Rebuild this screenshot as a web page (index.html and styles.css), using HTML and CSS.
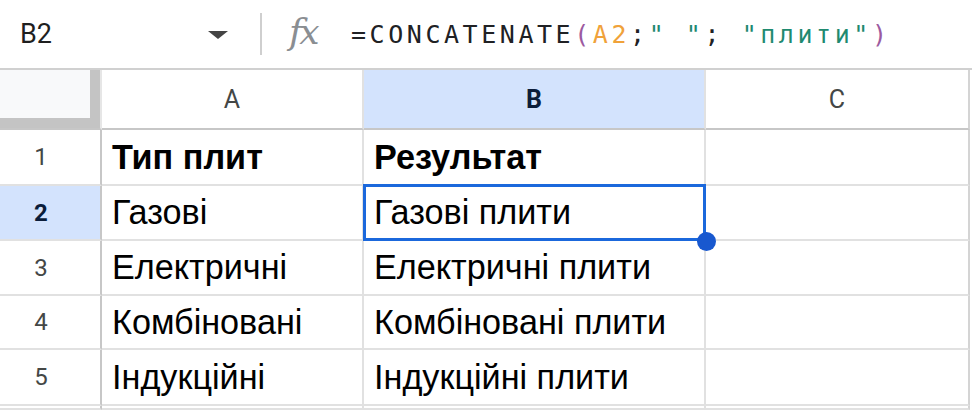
FILE: index.html
```html
<!DOCTYPE html>
<html lang="uk">
<head>
  <meta charset="UTF-8">
  <meta name="viewport" content="width=device-width, initial-scale=1.0">
  <title>Таблиця - плити</title>
  <link rel="stylesheet" href="styles.css">
</head>
<body>
  <div class="formula-bar">
    <div class="name-box">
      <span class="cell-ref">B2</span>
      <span class="caret"></span>
    </div>
    <div class="bar-divider"></div>
    <div class="fx">fx</div>
    <div class="formula"><span class="fn">=CONCATENATE</span><span class="paren">(</span><span class="ref">A2</span><span class="fn">;</span><span class="str">" "</span><span class="fn">; </span><span class="str">"плити"</span><span class="paren">)</span></div>
  </div>

  <div class="sheet">
    <div class="corner"><div class="corner-fill"></div></div>
    <div class="col-head">A</div>
    <div class="col-head selected">B</div>
    <div class="col-head">C</div>

    <div class="row-head">1</div>
    <div class="cell bold">Тип плит</div>
    <div class="cell bold">Результат</div>
    <div class="cell"></div>

    <div class="row-head selected">2</div>
    <div class="cell">Газові</div>
    <div class="cell active">Газові плити<span class="handle"></span></div>
    <div class="cell"></div>

    <div class="row-head">3</div>
    <div class="cell">Електричні</div>
    <div class="cell">Електричні плити</div>
    <div class="cell"></div>

    <div class="row-head">4</div>
    <div class="cell">Комбіновані</div>
    <div class="cell">Комбіновані плити</div>
    <div class="cell"></div>

    <div class="row-head">5</div>
    <div class="cell">Індукційні</div>
    <div class="cell">Індукційні плити</div>
    <div class="cell"></div>

    <div class="row-head"></div>
    <div class="cell"></div>
    <div class="cell"></div>
    <div class="cell"></div>
  </div>
</body>
</html>
```

FILE: styles.css
```css
:root {
  --grid: #e1e1e1;
  --head-line: #c7c7c7;
  --head-text: #444746;
  --select: #d3e3fd;
  --blue: #1b68dc;
}

body {
  margin: 0;
  width: 972px;
  height: 410px;
  overflow: hidden;
  background: #fff;
  font-family: 'Liberation Sans', Arial, sans-serif;
  color: #000;
}

/* formula bar */
.formula-bar {
  display: flex;
  align-items: center;
  height: 68px;
  border-bottom: 2px solid #d0d0d0;
}

.name-box {
  width: 228px;
  box-sizing: border-box;
  padding-left: 20px;
  display: flex;
  align-items: center;
  justify-content: space-between;
}

.cell-ref {
  font-family: Roboto, sans-serif;
  font-size: 27px;
  color: #1f1f1f;
}

.caret {
  width: 0;
  height: 0;
  border-left: 10px solid transparent;
  border-right: 10px solid transparent;
  border-top: 8px solid #444;
  margin-top: 2px;
}

.bar-divider {
  width: 2px;
  height: 42px;
  background: #cfcfcf;
  margin: 0 27px 0 32px;
}

.fx {
  font-family: 'DejaVu Serif', serif;
  font-style: italic;
  font-size: 36px;
  line-height: 1;
  color: #8a8e92;
  width: 40px;
  margin-right: 22px;
  letter-spacing: -3px;
  padding-bottom: 4px;
}

.formula {
  font-family: 'DejaVu Sans Mono', monospace;
  font-size: 25px;
  letter-spacing: 3.55px;
  white-space: pre;
}

.fn { color: #202124; }
.paren { color: #9c5aa0; }
.ref { color: #f0a23a; }
.str { color: #1f8a70; }

/* grid */
.sheet {
  display: grid;
  grid-template-columns: 102px 262px 342px 264px;
  grid-template-rows: 60px 56px 55px 55px 54px 56px 4px;
}

.sheet > div {
  box-sizing: border-box;
  border-right: 2px solid var(--grid);
  border-bottom: 2px solid var(--grid);
}

.corner {
  background: #c4c4c4;
  padding: 0 10px 10px 0;
  border-bottom-color: var(--head-line) !important;
  border-right-color: #e6e6e6 !important;
}

.corner-fill {
  height: 100%;
  background: #f8f9fa;
}

.col-head {
  display: flex;
  align-items: center;
  justify-content: center;
  font-family: Roboto, sans-serif;
  font-size: 25px;
  color: var(--head-text);
  border-bottom-color: var(--head-line) !important;
}

.sheet > div:nth-child(4n) {
  border-right-color: #d4d4d4;
}

.row-head {
  display: flex;
  align-items: center;
  justify-content: center;
  padding-right: 18px;
  font-family: Roboto, sans-serif;
  font-size: 24px;
  color: var(--head-text);
  border-right: 2px solid var(--head-line) !important;
}

.selected {
  background: var(--select);
  color: #0b1d3a;
  font-weight: bold;
}

.cell {
  display: flex;
  align-items: center;
  padding-left: 10px;
  font-size: 34.2px;
  white-space: nowrap;
}

.cell.bold {
  font-weight: bold;
}

.cell.active {
  position: relative;
}

.cell.active::after {
  content: "";
  position: absolute;
  top: -2px;
  left: -1px;
  right: -2px;
  bottom: -2px;
  border: 3px solid var(--blue);
}

.handle {
  position: absolute;
  right: -12px;
  bottom: -12px;
  width: 19px;
  height: 19px;
  border-radius: 50%;
  background: #1858cf;
  z-index: 2;
}
```
